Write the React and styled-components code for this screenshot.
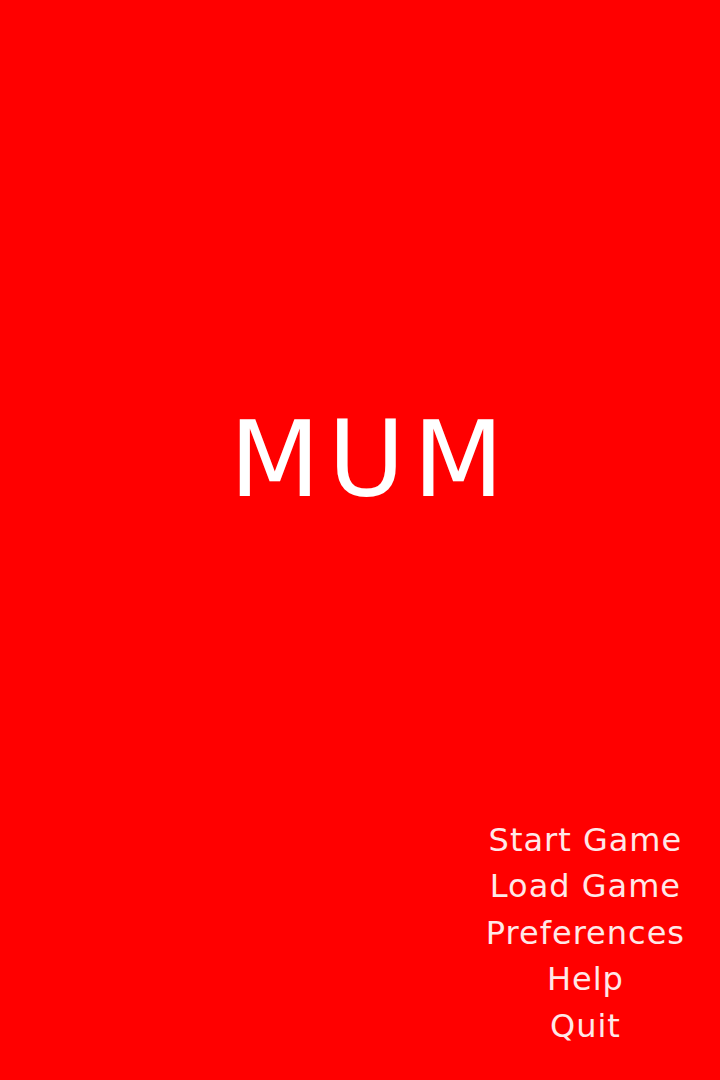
import React from "react";
import styled, { createGlobalStyle } from "styled-components";

const GlobalStyle = createGlobalStyle`
    html, body {
        margin: 0;
        padding: 0;
        background: #ff0000;
    }
`

const Screen = styled.div`
    width: 100%;
    height: 100vh;
    display: flex;
    flex-direction: column;
    background: #ff0000;
    font-family: "DejaVu Sans", sans-serif;
    overflow: hidden;
`
const Title = styled.h1`
    margin: 390px 0px 0px;
    padding-left: 21px;
    text-align: center;
    color: #ffffff;
    font-size: 105px;
    font-weight: 400;
    letter-spacing: 8px;
    line-height: 140px;
`
const Spacer = styled.div`
    flex: 1;
`
const Menu = styled.nav`
    align-self: flex-end;
    display: flex;
    flex-direction: column;
    align-items: center;
    margin: 0px 35px 31px 0px;
`
const MenuItem = styled.span`
    color: #ffe8e8;
    font-size: 32px;
    line-height: 46.5px;
    letter-spacing: 1px;
    cursor: pointer;
`

const items = ["Start Game", "Load Game", "Preferences", "Help", "Quit"];

const App = () => {
    return (
        <Screen>
            <GlobalStyle />
            <Title>MUM</Title>
            <Spacer />
            <Menu>
                {items.map((item) => (
                    <MenuItem key={item}>{item}</MenuItem>
                ))}
            </Menu>
        </Screen>
    )
}

export default App
